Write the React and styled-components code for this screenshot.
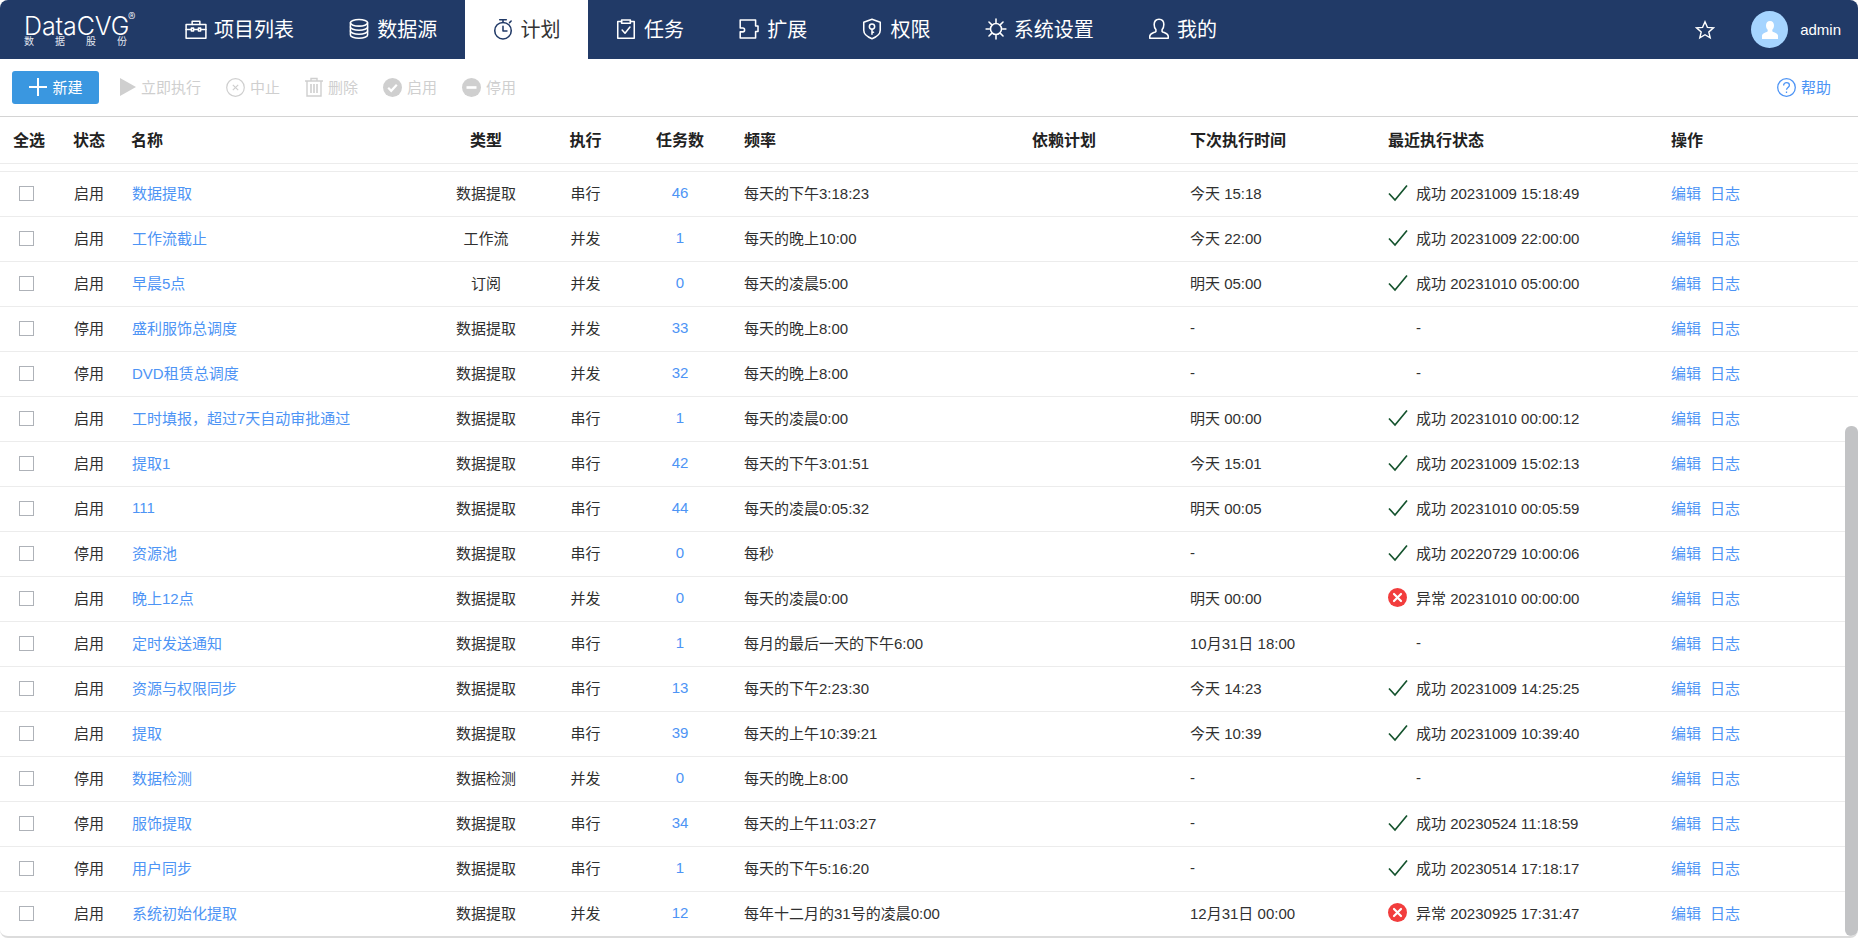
import React from 'react'
import styled, { createGlobalStyle } from 'styled-components'

const GlobalStyle = createGlobalStyle`
  html, body {
    margin: 0;
    padding: 0;
    background: #fff;
  }
  body {
    font-family: "Liberation Sans", "Noto Sans CJK SC", sans-serif;
    font-size: 15px;
    color: #303030;
  }
  * {
    box-sizing: border-box;
  }
`

const Page = styled.div`
  position: relative;
  width: 1858px;
  height: 938px;
  overflow: hidden;
  border-radius: 8px;
  border-bottom: 2px solid #dcdcdc;
  background: #fff;
`

const Header = styled.header`
  height: 59px;
  display: flex;
  align-items: stretch;
  background: #213a67;
  color: #fff;
`

const Logo = styled.div`
  width: 158px;
  padding: 16px 0 0 24px;
  flex-shrink: 0;
`

const LogoName = styled.div`
  position: relative;
  width: 103px;
  height: 20px;
  font-family: Inter, sans-serif;
  font-weight: 300;
  font-size: 25px;
  line-height: 20px;
  letter-spacing: -0.1px;
  white-space: nowrap;
`

const LogoMark = styled.span`
  position: absolute;
  left: 104px;
  top: -4px;
  font-size: 11px;
  line-height: 10px;
  letter-spacing: 0;
`

const LogoSub = styled.div`
  width: 103px;
  display: flex;
  justify-content: space-between;
  font-size: 10px;
  line-height: 12px;
  color: #e4e8f0;
`

const Nav = styled.nav`
  display: flex;
  align-items: stretch;
`

const NavItem = styled.a`
  display: flex;
  align-items: center;
  gap: 7px;
  padding: 0 27.3px 2px 27px;
  font-size: 20px;
  color: ${(p) => (p.$active ? '#333' : '#fff')};
  background: ${(p) => (p.$active ? '#fff' : 'transparent')};
  white-space: nowrap;
`

const NavIcon = styled.svg`
  width: 22px;
  height: 22px;
  flex-shrink: 0;
  fill: none;
  stroke: ${(p) => (p.$active ? '#213a67' : '#fff')};
  stroke-width: 1.4;
  stroke-linecap: round;
  stroke-linejoin: round;
`

const UserArea = styled.div`
  margin-left: auto;
  display: flex;
  align-items: center;
  padding-right: 17px;
`

const StarIcon = styled.svg`
  width: 20px;
  height: 20px;
  fill: none;
  stroke: #fff;
  stroke-width: 1.4;
  stroke-linejoin: miter;
`

const Avatar = styled.div`
  width: 37px;
  height: 37px;
  margin: 0 12px 0 36px;
  border-radius: 50%;
  background: #a5d4ff;
  display: flex;
  align-items: center;
  justify-content: center;
`

const UserName = styled.span`
  font-size: 15px;
`

const Toolbar = styled.div`
  height: 58px;
  display: flex;
  align-items: center;
  gap: 25px;
  padding: 0 27px 1px 12px;
  border-bottom: 1px solid #d4d4d4;
`

const NewButton = styled.button`
  width: 87px;
  height: 33px;
  margin-right: -4px;
  padding: 0 0 0 1px;
  display: flex;
  align-items: center;
  justify-content: center;
  gap: 5px;
  border: 0;
  border-radius: 3px;
  background: #3a97e0;
  color: #fff;
  font: inherit;
  font-size: 15px;

  & > span {
    position: relative;
    top: -1px;
  }
`

const ToolAction = styled.span`
  display: flex;
  align-items: center;
  gap: 5px;
  color: #cfcfcf;
  font-size: 15px;

  & > span {
    position: relative;
    top: -1px;
  }
`

const HelpLink = styled.a`
  margin-left: auto;
  display: flex;
  align-items: center;
  gap: 5px;
  color: #4d94f5;
  font-size: 15px;

  & > span {
    position: relative;
    top: -1px;
  }
`

const cols = '73px 58px 309px 92px 107px 82px 311px 158px 198px 283px 1fr'

const HeadRow = styled.div`
  height: 47px;
  padding-bottom: 2px;
  display: grid;
  grid-template-columns: ${cols};
  align-items: center;
  border-bottom: 1px solid #ececec;
  font-size: 16px;
  font-weight: 700;
  color: #222;
`

const Stripe = styled.div`
  height: 8px;
  border-bottom: 1px solid #ececec;
`

const Row = styled.div`
  height: 45px;
  padding-bottom: 4px;
  display: grid;
  grid-template-columns: ${cols};
  align-items: center;
  border-bottom: 1px solid #ececec;

  &:last-child {
    border-bottom: 0;
  }
`

const Cell = styled.div`
  white-space: nowrap;
  text-align: ${(p) => (p.$center ? 'center' : 'left')};
  padding-left: ${(p) => p.$pad || 0}px;
`

const Link = styled.a`
  color: #4d94f5;
`

const CheckBox = styled.span`
  display: block;
  width: 15px;
  height: 15px;
  margin: 2px 0 0 19px;
  border: 1px solid #aeb2b8;
`

const StatusCell = styled.div`
  display: flex;
  align-items: center;
  white-space: nowrap;
`

const StatusIcon = styled.span`
  width: 28px;
  display: flex;
  align-items: center;
  flex-shrink: 0;
`

const CheckSvg = styled.svg`
  margin-top: 2px;
`

const Actions = styled.div`
  display: flex;
  gap: 9px;
`

const ScrollThumb = styled.div`
  position: absolute;
  right: 0;
  top: 426px;
  width: 13px;
  height: 510px;
  border-radius: 6px;
  background: #c2c3c5;
`

const rows = [
  ['启用', '数据提取', '数据提取', '串行', '46', '每天的下午3:18:23', '今天 15:18', 'ok', '20231009 15:18:49'],
  ['启用', '工作流截止', '工作流', '并发', '1', '每天的晚上10:00', '今天 22:00', 'ok', '20231009 22:00:00'],
  ['启用', '早晨5点', '订阅', '并发', '0', '每天的凌晨5:00', '明天 05:00', 'ok', '20231010 05:00:00'],
  ['停用', '盛利服饰总调度', '数据提取', '并发', '33', '每天的晚上8:00', '-', '', ''],
  ['停用', 'DVD租赁总调度', '数据提取', '并发', '32', '每天的晚上8:00', '-', '', ''],
  ['启用', '工时填报，超过7天自动审批通过', '数据提取', '串行', '1', '每天的凌晨0:00', '明天 00:00', 'ok', '20231010 00:00:12'],
  ['启用', '提取1', '数据提取', '串行', '42', '每天的下午3:01:51', '今天 15:01', 'ok', '20231009 15:02:13'],
  ['启用', '111', '数据提取', '串行', '44', '每天的凌晨0:05:32', '明天 00:05', 'ok', '20231010 00:05:59'],
  ['停用', '资源池', '数据提取', '串行', '0', '每秒', '-', 'ok', '20220729 10:00:06'],
  ['启用', '晚上12点', '数据提取', '并发', '0', '每天的凌晨0:00', '明天 00:00', 'err', '20231010 00:00:00'],
  ['启用', '定时发送通知', '数据提取', '串行', '1', '每月的最后一天的下午6:00', '10月31日 18:00', '', ''],
  ['启用', '资源与权限同步', '数据提取', '串行', '13', '每天的下午2:23:30', '今天 14:23', 'ok', '20231009 14:25:25'],
  ['启用', '提取', '数据提取', '串行', '39', '每天的上午10:39:21', '今天 10:39', 'ok', '20231009 10:39:40'],
  ['停用', '数据检测', '数据检测', '并发', '0', '每天的晚上8:00', '-', '', ''],
  ['停用', '服饰提取', '数据提取', '串行', '34', '每天的上午11:03:27', '-', 'ok', '20230524 11:18:59'],
  ['停用', '用户同步', '数据提取', '串行', '1', '每天的下午5:16:20', '-', 'ok', '20230514 17:18:17'],
  ['启用', '系统初始化提取', '数据提取', '并发', '12', '每年十二月的31号的凌晨0:00', '12月31日 00:00', 'err', '20230925 17:31:47'],
]

const navIcons = {
  briefcase: (
    <>
      <path d="M1 6h18v12.5H1z" />
      <path d="M6.5 6V3h7v3" />
      <path d="M1 10.5h4.5M14.5 10.5H19M8 10.5h4" />
      <path d="M5.8 9.2h2v2.6h-2zM12.2 9.2h2v2.6h-2z" />
    </>
  ),
  database: (
    <>
      <ellipse cx="10" cy="4.4" rx="7.8" ry="3" />
      <path d="M2.2 4.4v11c0 1.7 3.5 3 7.8 3s7.8-1.3 7.8-3v-11" />
      <path d="M2.2 8.1c0 1.7 3.5 3 7.8 3s7.8-1.3 7.8-3" />
      <path d="M2.2 11.8c0 1.7 3.5 3 7.8 3s7.8-1.3 7.8-3" />
    </>
  ),
  timer: (
    <>
      <circle cx="10" cy="11.5" r="7.5" />
      <path d="M7 1.5h6M10 1.5V4M16 4.2l1.4-1.4M10 7.5v4.3h3.6" />
    </>
  ),
  task: (
    <>
      <path d="M6 3.2H2.5v15.3h15V3.2H14" />
      <path d="M6 1.8h8v3H6z" />
      <path d="M6.5 11l2.6 2.8 4.5-5.6" />
    </>
  ),
  plugin: (
    <path d="M2 1.8h14v5.4h2.2v5H16v6H2v-5.6h2.4c1 0 1.6-.8 1.6-1.7s-.6-1.8-1.6-1.8H2z" />
  ),
  shield: (
    <>
      <path d="M10 1.2l7.5 2.6v7.4c0 3.6-3.2 6-7.5 7.6-4.3-1.6-7.5-4-7.5-7.6V3.8z" />
      <circle cx="10" cy="7.8" r="2.4" />
      <path d="M10 10.2v4.6M10 13h1.4" />
    </>
  ),
  gear: (
    <>
      <circle cx="10" cy="10" r="5" />
      <path d="M10 1v3M10 16v3M1 10h3M16 10h3M3.6 3.6l2.2 2.2M14.2 14.2l2.2 2.2M16.4 3.6l-2.2 2.2M5.8 14.2l-2.2 2.2" />
    </>
  ),
  user: (
    <path d="M7.2 12.2V10.6C5.8 9.2 5.6 7.8 5.6 6c0-3 1.8-4.8 4.4-4.8s4.4 1.8 4.4 4.8c0 1.8-.2 3.2-1.6 4.6v1.6c1 1.2 5.6 1.4 5.6 4.4v1.8H1.6v-1.8c0-3 4.6-3.2 5.6-4.4z" />
  ),
}

const menu = [
  ['briefcase', '项目列表'],
  ['database', '数据源'],
  ['timer', '计划', true],
  ['task', '任务'],
  ['plugin', '扩展'],
  ['shield', '权限'],
  ['gear', '系统设置'],
  ['user', '我的'],
]

const CheckMark = () => (
  <CheckSvg width="20" height="18" viewBox="0 0 20 18" fill="none" stroke="#14532d" strokeWidth="1.7">
    <path d="M1 9.5l6 6.5L19 1.5" />
  </CheckSvg>
)

const ErrorMark = () => (
  <svg width="19" height="19" viewBox="0 0 19 19">
    <circle cx="9.5" cy="9.5" r="9.5" fill="#f23d3d" />
    <path d="M6 6l7 7M13 6l-7 7" stroke="#fff" strokeWidth="2.2" strokeLinecap="round" />
  </svg>
)

export default function App() {
  return (
    <Page>
      <GlobalStyle />
      <Header>
        <Logo>
          <LogoName>
            DataCVG
            <LogoMark>®</LogoMark>
          </LogoName>
          <LogoSub>
            <span>数</span>
            <span>据</span>
            <span>股</span>
            <span>份</span>
          </LogoSub>
        </Logo>
        <Nav>
          {menu.map(([icon, label, active]) => (
            <NavItem key={label} $active={active}>
              <NavIcon viewBox="0 0 20 20" $active={active}>
                {navIcons[icon]}
              </NavIcon>
              {label}
            </NavItem>
          ))}
        </Nav>
        <UserArea>
          <StarIcon viewBox="0 0 20 20">
            <path d="M10 1.8l2.4 5.6 6 .5-4.6 4 1.4 5.9-5.2-3.1-5.2 3.1 1.4-5.9-4.6-4 6-.5z" />
          </StarIcon>
          <Avatar>
            <svg width="20" height="20" viewBox="0 0 20 20" fill="#fff">
              <path d="M10 1c2.6 0 4 1.9 4 4.4 0 1.8-.7 3.4-1.7 4.3v1.5c0 1 5.7 1.7 5.7 4.4V19H2v-3.4c0-2.7 5.7-3.4 5.7-4.4V9.7C6.7 8.8 6 7.2 6 5.4 6 2.9 7.4 1 10 1z" />
            </svg>
          </Avatar>
          <UserName>admin</UserName>
        </UserArea>
      </Header>

      <Toolbar>
        <NewButton>
          <svg width="18" height="18" viewBox="0 0 18 18" stroke="#fff" strokeWidth="2">
            <path d="M0 9h18M9 0v18" />
          </svg>
          <span>新建</span>
        </NewButton>
        <ToolAction>
          <svg width="16" height="18" viewBox="0 0 16 18" fill="#cfcfcf">
            <path d="M0 0l16 9-16 9z" />
          </svg>
          <span>立即执行</span>
        </ToolAction>
        <ToolAction>
          <svg width="19" height="19" viewBox="0 0 19 19" fill="none" stroke="#cfcfcf" strokeWidth="1.2">
            <circle cx="9.5" cy="9.5" r="8.8" />
            <path d="M6.8 6.8l5.4 5.4M12.2 6.8l-5.4 5.4" />
          </svg>
          <span>中止</span>
        </ToolAction>
        <ToolAction>
          <svg width="18" height="20" viewBox="0 0 18 20" fill="none" stroke="#cfcfcf" strokeWidth="1.4">
            <path d="M0 4h18M6 4V1.5h6V4M2 4v15h14V4" />
            <path d="M6 7v9M9 7v9M12 7v9" strokeWidth="1.6" />
          </svg>
          <span>删除</span>
        </ToolAction>
        <ToolAction>
          <svg width="19" height="19" viewBox="0 0 19 19">
            <circle cx="9.5" cy="9.5" r="9.5" fill="#cfcfcf" />
            <path d="M5.2 9.8l3 3 5.6-6" fill="none" stroke="#fff" strokeWidth="2.2" />
          </svg>
          <span>启用</span>
        </ToolAction>
        <ToolAction>
          <svg width="19" height="19" viewBox="0 0 19 19">
            <circle cx="9.5" cy="9.5" r="9.5" fill="#cfcfcf" />
            <path d="M4.5 9.5h10" stroke="#fff" strokeWidth="2.6" />
          </svg>
          <span>停用</span>
        </ToolAction>
        <HelpLink>
          <svg width="19" height="19" viewBox="0 0 19 19" fill="none" stroke="#4d94f5" strokeWidth="1.3">
            <circle cx="9.5" cy="9.5" r="8.8" />
            <path d="M6.6 7.4c0-1.7 1.3-2.8 2.9-2.8s2.9 1 2.9 2.6c0 2.2-2.9 2.3-2.9 4.6" />
            <path d="M9.5 13.4v1.5" />
          </svg>
          <span>帮助</span>
        </HelpLink>
      </Toolbar>

      <HeadRow>
        <Cell $pad={13}>全选</Cell>
        <Cell>状态</Cell>
        <Cell>名称</Cell>
        <Cell $center>类型</Cell>
        <Cell $center>执行</Cell>
        <Cell $center>任务数</Cell>
        <Cell $pad={23}>频率</Cell>
        <Cell>依赖计划</Cell>
        <Cell>下次执行时间</Cell>
        <Cell>最近执行状态</Cell>
        <Cell>操作</Cell>
      </HeadRow>
      <Stripe />

      {rows.map((r) => (
        <Row key={r[1]}>
          <Cell>
            <CheckBox />
          </Cell>
          <Cell $pad={1}>{r[0]}</Cell>
          <Cell $pad={1}>
            <Link>{r[1]}</Link>
          </Cell>
          <Cell $center>{r[2]}</Cell>
          <Cell $center>{r[3]}</Cell>
          <Cell $center>
            <Link>{r[4]}</Link>
          </Cell>
          <Cell $pad={23}>{r[5]}</Cell>
          <Cell />
          <Cell>{r[6]}</Cell>
          <StatusCell>
            <StatusIcon>
              {r[7] === 'ok' && <CheckMark />}
              {r[7] === 'err' && <ErrorMark />}
            </StatusIcon>
            {r[7] === 'ok' && `成功 ${r[8]}`}
            {r[7] === 'err' && `异常 ${r[8]}`}
            {r[7] === '' && '-'}
          </StatusCell>
          <Actions>
            <Link>编辑</Link>
            <Link>日志</Link>
          </Actions>
        </Row>
      ))}

      <ScrollThumb />
    </Page>
  )
}
